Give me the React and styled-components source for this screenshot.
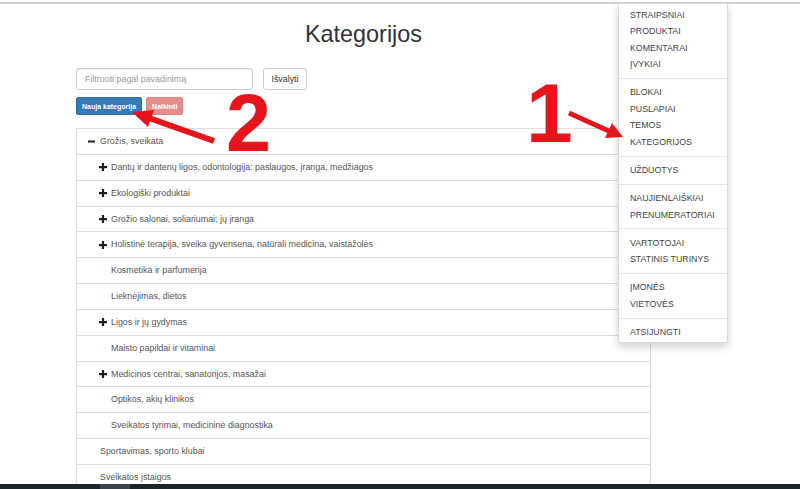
import React from 'react';
import styled, { createGlobalStyle } from 'styled-components';

const categories = [
  { name: 'Grožis, sveikata', level: 0, icon: 'minus' },
  { name: 'Dantų ir dantenų ligos, odontologija: paslaugos, įranga, medžiagos', level: 1, icon: 'plus' },
  { name: 'Ekologiški produktai', level: 1, icon: 'plus' },
  { name: 'Grožio salonai, soliariumai; jų įranga', level: 1, icon: 'plus' },
  { name: 'Holistinė terapija, sveika gyvensena, natūrali medicina, vaistažolės', level: 1, icon: 'plus' },
  { name: 'Kosmetika ir parfumerija', level: 1 },
  { name: 'Lieknėjimas, dietos', level: 1 },
  { name: 'Ligos ir jų gydymas', level: 1, icon: 'plus' },
  { name: 'Maisto papildai ir vitaminai', level: 1 },
  { name: 'Medicinos centrai, sanatorijos, masažai', level: 1, icon: 'plus' },
  { name: 'Optikos, akių klinikos', level: 1 },
  { name: 'Sveikatos tyrimai, medicininė diagnostika', level: 1 },
  { name: 'Sportavimas, sporto klubai', level: 0 },
  { name: 'Sveikatos įstaigos', level: 0 },
];

const menuGroups = [
  ['STRAIPSNIAI', 'PRODUKTAI', 'KOMENTARAI', 'ĮVYKIAI'],
  ['BLOKAI', 'PUSLAPIAI', 'TEMOS', 'KATEGORIJOS'],
  ['UŽDUOTYS'],
  ['NAUJIENLAIŠKIAI', 'PRENUMERATORIAI'],
  ['VARTOTOJAI', 'STATINIS TURINYS'],
  ['ĮMONĖS', 'VIETOVĖS'],
  ['ATSIJUNGTI'],
];

function TreeIcon({ type }) {
  if (type === 'minus') {
    return (
      <svg width="7" height="7" viewBox="0 0 7 7">
        <rect x="0" y="2.5" width="7" height="2" fill="#1e1e1e" />
      </svg>
    );
  }
  return (
    <svg width="8" height="8" viewBox="0 0 8 8">
      <rect x="0" y="3" width="8" height="2.2" fill="#1e1e1e" />
      <rect x="2.9" y="0" width="2.2" height="8" fill="#1e1e1e" />
    </svg>
  );
}

export default function App() {
  return (
    <>
      <GlobalStyle />
      <Page>
        <TopBar />
        <Main>
          <Column>
            <Title>Kategorijos</Title>
            <FilterRow>
              <FilterInput placeholder="Filtruoti pagal pavadinimą" />
              <DefaultButton>Išvalyti</DefaultButton>
            </FilterRow>
            <ActionRow>
              <SmallButton $variant="primary">Nauja kategorija</SmallButton>
              <SmallButton $variant="danger">Naikinti</SmallButton>
            </ActionRow>
            <List>
              {categories.map((c) => (
                <Row key={c.name} $level={c.level}>
                  <IconSlot>{c.icon && <TreeIcon type={c.icon} />}</IconSlot>
                  <RowText>{c.name}</RowText>
                </Row>
              ))}
            </List>
          </Column>
        </Main>
        <Taskbar>
          <TaskbarItem />
        </Taskbar>

        <Menu>
          {menuGroups.map((group, i) => (
            <React.Fragment key={i}>
              {i > 0 && <Divider />}
              {group.map((item) => (
                <MenuItem key={item}>{item}</MenuItem>
              ))}
            </React.Fragment>
          ))}
        </Menu>

        <Annotations viewBox="0 0 800 489" width="800" height="489">
          <Digit x="526" y="142" fontSize="84">1</Digit>
          <line x1="569" y1="113" x2="611" y2="132" stroke="#e8141c" strokeWidth="5" />
          <polygon points="623,137 605,138 612,123" fill="#e8141c" />

          <Digit x="226" y="151" fontSize="81">2</Digit>
          <line x1="214" y1="141" x2="149" y2="118" stroke="#e8141c" strokeWidth="6" />
          <polygon points="132,112 154,110 148,127" fill="#e8141c" />
        </Annotations>
      </Page>
    </>
  );
}

const GlobalStyle = createGlobalStyle`
  html, body {
    margin: 0;
    padding: 0;
    background: #fff;
  }
  body {
    font-family: "Liberation Sans", Arial, sans-serif;
    color: #333;
  }
  * {
    box-sizing: border-box;
  }
`;

const Page = styled.div`
  position: relative;
  height: 100vh;
  display: flex;
  flex-direction: column;
  overflow: hidden;
`;

const TopBar = styled.div`
  height: 4px;
  flex-shrink: 0;
  border-bottom: 2px solid #d2d2d2;
  background: #fff;
`;

const Main = styled.div`
  flex: 1;
  overflow: hidden;
  padding-left: 76px;
`;

const Column = styled.div`
  width: 575px;
`;

const Title = styled.h1`
  margin: 17px 0 0;
  font-size: 23.4px;
  line-height: 26px;
  font-weight: normal;
  text-align: center;
  color: #333;
`;

const FilterRow = styled.div`
  display: flex;
  gap: 10px;
  margin-top: 21px;
`;

const FilterInput = styled.input`
  width: 177px;
  height: 22px;
  padding: 0 8px;
  border: 1px solid #ccc;
  border-radius: 3px;
  font-family: inherit;
  font-size: 8.9px;
  color: #555;
  box-shadow: inset 0 1px 1px rgba(0, 0, 0, 0.075);
  &::placeholder {
    color: #999;
  }
`;

const DefaultButton = styled.button`
  width: 44px;
  height: 22px;
  padding: 0;
  border: 1px solid #ccc;
  border-radius: 3px;
  background: #fff;
  font-family: inherit;
  font-size: 8.9px;
  color: #333;
`;

const ActionRow = styled.div`
  display: flex;
  gap: 4px;
  margin-top: 7px;
`;

const SmallButton = styled.button`
  height: 18px;
  padding: 0 5px;
  border-radius: 2px;
  font-family: inherit;
  font-size: 7px;
  font-weight: bold;
  color: #fff;
  border: 1px solid ${(p) => (p.$variant === 'primary' ? '#2e6da4' : '#d43f3a')};
  background: ${(p) => (p.$variant === 'primary' ? '#337ab7' : '#d9534f')};
  opacity: ${(p) => (p.$variant === 'primary' ? 1 : 0.65)};
`;

const List = styled.div`
  margin-top: 13px;
  border-left: 1px solid #ddd;
  border-right: 1px solid #ddd;
  padding-bottom: 40px;
`;

const Row = styled.div`
  display: flex;
  align-items: center;
  padding: 6px 10px 6px ${(p) => 11 + p.$level * 11}px;
  border-top: 1px solid #ddd;
  line-height: 12.85px;
  font-size: 8.9px;
  color: #555;
`;

const IconSlot = styled.span`
  display: inline-flex;
  align-items: center;
  width: 12px;
  flex-shrink: 0;
`;

const RowText = styled.span`
  white-space: nowrap;
`;

const Taskbar = styled.div`
  height: 5px;
  flex-shrink: 0;
  background: #1d2428;
  display: flex;
  padding-left: 100px;
`;

const TaskbarItem = styled.div`
  width: 30px;
  background: #3c4449;
`;

const Menu = styled.ul`
  position: absolute;
  top: 3px;
  right: 72px;
  width: 110px;
  margin: 0;
  padding: 3px 0 2px;
  list-style: none;
  background: #fff;
  border: 1px solid rgba(0, 0, 0, 0.15);
  border-radius: 2px;
  box-shadow: 0 4px 8px rgba(0, 0, 0, 0.175);
`;

const MenuItem = styled.li`
  padding: 1.9px 11px;
  font-size: 8.8px;
  line-height: 12.7px;
  color: #444;
  white-space: nowrap;
`;

const Divider = styled.li`
  height: 1px;
  margin: 5.3px 0;
  background: #e5e5e5;
`;

const Annotations = styled.svg`
  position: absolute;
  top: 0;
  left: 0;
  pointer-events: none;
`;

const Digit = styled.text`
  font-family: "Liberation Sans", Arial, sans-serif;
  font-weight: bold;
  fill: #e8141c;
`;
